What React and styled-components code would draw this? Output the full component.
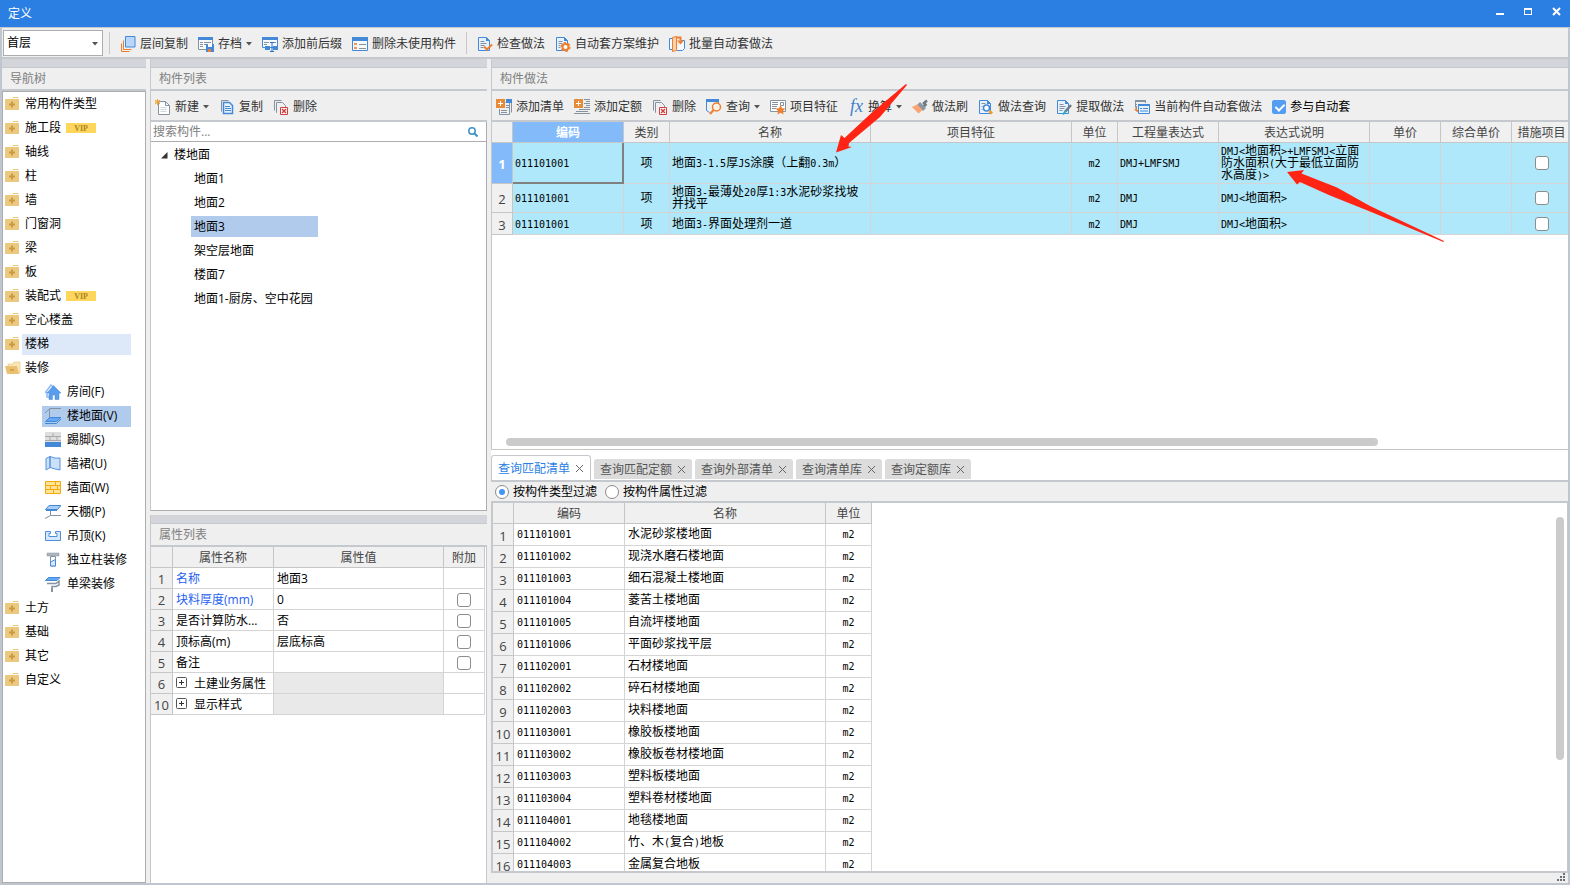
import React, { useState } from 'react';
import styled, { createGlobalStyle, css } from 'styled-components';

const UI_FONT = "'Open Sans', 'Noto Sans CJK SC', sans-serif";
const MONO_FONT = "'DejaVu Sans Mono', 'Noto Sans CJK SC', monospace";

const GlobalStyle = createGlobalStyle`
    * {
        box-sizing: border-box;
    }
    body {
        margin: 0;
        overflow: hidden;
        background: #efefef;
    }
    body, button, input, select, table {
        font-family: ${UI_FONT};
        font-size: 12px;
        line-height: 16px;
        color: #000000;
    }
    button {
        margin: 0;
        padding: 0;
        border: none;
        background: none;
        white-space: nowrap;
    }
    ul {
        margin: 0;
        padding: 0;
        list-style: none;
    }
`;

/* ---------- layout ---------- */

const Window = styled.div`
    position: relative;
    display: flex;
    flex-direction: column;
    height: 100vh;
    border: solid #c0c6d0;
    border-width: 0 2px 2px 2px;
    background: #efefef;
`;
const TitleBar = styled.header`
    display: flex;
    justify-content: space-between;
    align-items: center;
    flex: none;
    height: 28px;
    margin: 0 -2px;
    padding-left: 8px;
    border-bottom: 1px solid #c5c8cd;
    background: #2b7fe3;
    color: #ffffff;
`;
const WindowButton = styled.button`
    width: 28px;
    height: 27px;
    svg {
        display: block;
        margin: 0 auto;
    }
`;
const MainToolbar = styled.div`
    display: flex;
    align-items: center;
    flex: none;
    gap: 10px;
    height: 31px;
    padding-left: 1px;
    border-bottom: 2px solid #c5c8cd;
`;
const Workspace = styled.main`
    display: grid;
    grid-template-columns: 144px 337px minmax(0, 1fr);
    gap: 4px;
    flex: 1;
    min-height: 0;
`;
const NavColumn = styled.section`
    display: flex;
    flex-direction: column;
    min-height: 0;
`;
const MiddleColumn = styled.div`
    display: grid;
    grid-template-rows: minmax(0, 1fr) 368px;
    gap: 4px;
    min-height: 0;
`;
const RightColumn = styled.div`
    display: grid;
    grid-template-rows: minmax(0, 1fr) 433px;
    min-height: 0;
    min-width: 0;
`;
const Panel = styled.section`
    display: flex;
    flex-direction: column;
    min-height: 0;
    min-width: 0;
    border-left: 1px solid #c5c8cd;
`;

const PanelTitle = styled.h2`
    flex: none;
    height: 32px;
    margin: 0;
    padding: 4px 8px 0;
    border-top: 8px solid #d3d5db;
    border-bottom: 2px solid #c5c8cd;
    box-shadow: inset 0 1px 0 #c5c8cd;
    font-size: 12px;
    font-weight: normal;
    line-height: 16px;
    color: #808080;
`;

/* ---------- toolbar parts ---------- */

const PanelToolbar = styled.div`
    display: flex;
    align-items: center;
    flex: none;
    gap: 10px;
    height: 31px;
    padding: 2px 0 0 4px;
    border-bottom: 2px solid #c5c8cd;
`;
const ToolButton = styled.button`
    display: flex;
    align-items: center;
    gap: 4px;
    padding-top: ${(props) => (props.$low ? '2px' : '0')};
    color: #333333;
    svg {
        overflow: visible;
    }
`;
const Separator = styled.span`
    width: 1px;
    height: 22px;
    background: #c8c8c8;
`;
const FloorField = styled.label`
    position: relative;
    width: 100px;
    height: 26px;
    margin-right: -4px;
    select {
        appearance: none;
        width: 100%;
        height: 100%;
        padding: 0 3px;
        border: 1px solid #adadad;
        border-radius: 0;
        background: #ffffff;
    }
    svg {
        position: absolute;
        right: 5px;
        top: 12px;
    }
`;

const CheckBox = styled.input.attrs({ type: 'checkbox' })`
    appearance: none;
    display: block;
    width: 14px;
    height: 14px;
    margin: ${(props) => (props.$inCell ? '0 auto' : '0')};
    border: 1px solid #8c8c8c;
    border-radius: 3px;
    background: #ffffff;
    &:checked {
        border-color: #549df5;
        border-radius: 2px;
        background: #549df5;
    }
    &:checked::after {
        content: '';
        display: block;
        width: 4px;
        height: 7px;
        margin: 1px 0 0 4px;
        border: solid #ffffff;
        border-width: 0 2px 2px 0;
        transform: rotate(45deg);
    }
`;
const RadioButton = styled.input.attrs({ type: 'radio' })`
    appearance: none;
    width: 14px;
    height: 14px;
    margin: 0;
    padding: 3px;
    border: 1px solid #8c8c8c;
    border-radius: 50%;
    background: #ffffff;
    &:checked::after {
        content: '';
        display: block;
        width: 6px;
        height: 6px;
        border-radius: 50%;
        background: #4295f5;
    }
`;
const CheckLabel = styled.label`
    display: flex;
    align-items: center;
    gap: 4px;
    white-space: nowrap;
`;

/* ---------- navigation tree ---------- */

const NavList = styled.ul`
    flex: 1;
    min-height: 0;
    overflow: hidden;
    border: 1px solid #adadad;
    background: #ffffff;
`;
const NavItem = styled.li`
    display: flex;
    align-items: center;
    height: 24px;
    padding: 0 14px 0 ${(props) => (props.$sub ? '39px' : '2px')};
`;
const NavLabel = styled.button`
    display: flex;
    align-items: center;
    flex: 1;
    gap: ${(props) => (props.$sub ? '6px' : '5px')};
    height: 21px;
    margin-left: ${(props) => (props.$sub ? '0' : '1px')};
    padding-left: 3px;
    background: ${(props) => props.$bg || 'transparent'};
`;
const VipBadge = styled.span`
    width: 30px;
    height: 10px;
    background: #ffd65c;
    font-family: 'Liberation Serif', serif;
    font-size: 8px;
    font-weight: bold;
    line-height: 11px;
    text-align: center;
    color: #a8832a;
`;

/* ---------- component tree ---------- */

const SearchBox = styled.label`
    display: flex;
    align-items: center;
    flex: none;
    height: 19px;
    padding: 0 8px 0 2px;
    border-right: 1px solid #adadad;
    background: #ffffff;
    input {
        flex: 1;
        min-width: 0;
        padding: 0;
        border: none;
        outline: none;
        background: transparent;
    }
    input::placeholder {
        color: #808080;
        opacity: 1;
    }
`;
const TreeBox = styled.ul`
    flex: 1;
    min-height: 0;
    overflow: hidden;
    border: 1px solid #adadad;
    border-left: none;
    background: #ffffff;
`;
const TreeRoot = styled.li`
    display: flex;
    align-items: center;
    gap: 6px;
    height: 24px;
    padding: 2px 0 0 10px;
`;
const TreeItem = styled.li`
    height: 24px;
    padding: 2px 0 0 40px;
    button {
        min-width: 127px;
        height: 21px;
        padding: 0 3px;
        text-align: left;
        background: ${(props) => (props.$selected ? '#b1cbed' : 'transparent')};
    }
`;

/* ---------- tables ---------- */

const Table = styled.table`
    flex: none;
    table-layout: fixed;
    border-collapse: separate;
    border-spacing: 0;
    width: ${(props) => props.$width};
`;
const HeadCell = styled.th`
    height: 21px;
    padding: 2px 0 0;
    border: solid #c6c6c6;
    border-width: 0 1px 1px 0;
    background: ${(props) => (props.$active ? '#83bbfa' : '#f0f0f0')};
    font-weight: ${(props) => (props.$active ? 'bold' : 'normal')};
    white-space: nowrap;
    color: ${(props) => (props.$active ? '#ffffff' : '#444444')};
`;
const RowHead = styled(HeadCell)`
    height: ${(props) => props.$height};
    font-size: 13px;
`;
const Cell = styled.td`
    height: ${(props) => props.$height || '21px'};
    padding: 1px 3px 0;
    border: solid #d4d4d4;
    border-width: 0 1px 1px 0;
    background: ${(props) => props.$bg || '#ffffff'};
    text-align: ${(props) => props.$align || 'left'};
    white-space: nowrap;
    color: ${(props) => (props.$link ? '#1f5ff2' : '#000000')};
`;
const MonoCell = styled(Cell)`
    padding: 0 2px;
    line-height: 12px;
    white-space: normal;
    ${(props) =>
        props.$focused &&
        css`
            border-right: 2px solid #808080;
            border-bottom: 2px solid #808080;
        `}
`;
const ResultCell = styled(MonoCell)`
    height: 22px;
    padding: 0 3px 2px;
`;
const Half = styled.span`
    font-family: ${MONO_FONT};
    font-size: 10px;
    line-height: 8px;
`;
const Expander = styled.button`
    display: inline-block;
    width: 12px;
    height: 12px;
    margin-right: 6px;
    vertical-align: -1px;
    svg {
        display: block;
    }
`;
const PropertyBody = styled.div`
    flex: 1;
    min-height: 0;
    border-right: 1px solid #c5c8cd;
    background: #ffffff;
`;
const MethodBody = styled.div`
    display: flex;
    flex-direction: column;
    justify-content: space-between;
    flex: 1;
    min-height: 0;
    overflow: hidden;
    border-bottom: 1px solid #c5c5c5;
    background: #ffffff;
`;
const HorizontalThumb = styled.div`
    width: 81%;
    height: 8px;
    margin: 0 0 3px 14px;
    border-radius: 4px;
    background: #cbcbcb;
`;

/* ---------- query panel ---------- */

const QueryPanel = styled.section`
    display: flex;
    flex-direction: column;
    min-height: 0;
`;
const TabRow = styled.div`
    display: flex;
    align-items: flex-end;
    flex: none;
    gap: 3px;
    height: 30px;
    background: #ffffff;
`;
const Tab = styled.div`
    display: flex;
    align-items: center;
    gap: 5px;
    height: 20px;
    margin-bottom: 1px;
    padding: 1px 6px 0;
    border-radius: 3px 3px 0 0;
    background: #dcdcdc;
    button {
        color: #555555;
    }
    ${(props) =>
        props.$active &&
        css`
            height: 25px;
            margin-bottom: 0;
            border: 1px solid #c5c8cd;
            border-bottom: none;
            background: #ffffff;
            button:first-child {
                color: #2b7fe3;
            }
        `}
`;
const FilterBar = styled.div`
    display: flex;
    align-items: center;
    flex: none;
    gap: 8px;
    height: 23px;
    padding-left: 4px;
    border: solid #c5c8cd;
    border-width: 2px 0;
`;
const ResultBody = styled.div`
    display: flex;
    justify-content: space-between;
    flex: 1;
    min-height: 0;
    overflow: hidden;
    border: solid #c5c8cd;
    border-width: 0 1px 2px 2px;
    background: #ffffff;
`;
const VerticalThumb = styled.div`
    width: 8px;
    height: 66%;
    margin: 14px 3px 0 0;
    border-radius: 4px;
    background: #cbcbcb;
`;
const StatusBar = styled.footer`
    display: flex;
    justify-content: flex-end;
    flex: none;
    height: 10px;
    padding-right: 2px;
`;

const ArrowLayer = styled.svg`
    position: absolute;
    left: ${(props) => props.$left}px;
    top: ${(props) => props.$top}px;
    pointer-events: none;
`;

/* ---------- icons ---------- */

const B = '#4489d8';
const G = '#8593a0';
const O = '#ef7f2d';

const docPath = 'M1.5 1.5h8l3 3v10h-11z';

const icons = {
    layerCopy: (
        <>
            <path d="M5.5.5h9.5v10.5H5.5z" fill="#b9d7fc" stroke={B} />
            <path d="M3.5 4.5v9h8M1.5 7.5v8h8" fill="none" stroke={O} />
        </>
    ),
    archive: (
        <>
            <path d="M.5 1.5h14v12h-14z" fill="#f7fafd" stroke={G} />
            <path d="M0 1h15v3H0z" fill={B} />
            <path d="M2 6.5h3M6 6.5h7M2 8.5h3M2 10.5h3M6 8.5h2" stroke={G} />
            <path d="M8 8h8v8H8z" fill={B} />
            <path d="M10 8h4v3h-4z" fill="#fff" />
            <path d="M10 13h3v3h-3z" fill={O} />
        </>
    ),
    affix: (
        <>
            <path d="M.5 1.5h15v10H.5z" fill="#f7fafd" stroke={B} />
            <path d="M0 1h16v3H0z" fill={B} />
            <path d="M2 6.5h5M2 8.5h3M11 6.5h3" stroke={G} />
            <path d="M3 10h5v4H3zM11 10h5v4h-5z" fill={B} />
            <path d="M8 6.5h4M8 15.5h4M10 7v8" stroke="#2d6fbf" fill="none" />
        </>
    ),
    unused: (
        <>
            <path d="M.5 1.5h15v13H.5z" fill="#f7fafd" stroke={B} />
            <path d="M0 1h16v4H0z" fill={B} />
            <path d="M2 7l3 2M5 7L2 9M2 11l3 2M5 11l-3 2" stroke={O} />
            <path d="M7 8.5h7M7 12.5h7" stroke={G} />
        </>
    ),
    check: (
        <>
            <path d={docPath} fill="#e8f2fe" stroke={B} />
            <path d="M9 1v4h4z" fill={B} />
            <path d="M3.5 5.5h4M3.5 7.5h6M3.5 9.5h4M3.5 11.5h3" stroke={G} />
            <path d="M7 10.5l3 3 5-5" fill="none" stroke={O} strokeWidth="2" />
        </>
    ),
    gearDoc: (
        <>
            <path d={docPath} fill="#e8f2fe" stroke={B} />
            <path d="M9 1v4h4z" fill={B} />
            <path d="M3.5 5.5h4M3.5 7.5h4M3.5 9.5h2M3.5 11.5h2" stroke={G} />
            <circle cx="10.5" cy="11" r="3" fill="#fff" stroke={O} strokeWidth="2" />
            <circle cx="10.5" cy="11" r="4.3" fill="none" stroke={O} strokeWidth="1.5" strokeDasharray="2.2 2.3" />
        </>
    ),
    batch: (
        <>
            <path d="M4 2.5H.5v11H4M12 4.5h3.5v8l-2 2H8" fill="#f7fbff" stroke={B} />
            <path d="M3.5 1.5l4-1v14l-4 1z" fill="#fbd0ac" stroke={O} />
            <path d="M7 1.5h4.5v3" fill="none" stroke={O} strokeWidth="2" />
            <path d="M8 4.5h7l-3.5 4z" fill={O} />
        </>
    ),
    newDoc: (
        <>
            <path d="M3.5 2.5h7l4 4v9h-11z" fill="#fff" stroke={G} />
            <path d="M10.5 2.5v4h4" fill="none" stroke={G} />
            <path d="M5.5 8.5h6M5.5 10.5h6M5.5 12.5h6" stroke="#d0d5da" />
            <path d="M0 1l5 4M5 1L0 5M2.5 0v6M0 3h5" stroke="#f0a22e" />
        </>
    ),
    copy: (
        <>
            <path d="M2.5 12.5v-11h7" fill="none" stroke={G} />
            <path d="M4.5 3.5h6l3 3v8h-9z" fill="#e8f2fe" stroke={B} strokeWidth="1.5" />
            <path d="M6 7.5h5M6 9.5h6M6 11.5h6" stroke={B} />
        </>
    ),
    remove: (
        <>
            <path d="M1.5 11.5v-10h7M4 13.5h-.5v-10h6l3 3V8" fill="none" stroke={G} />
            <path d="M7.5 8.5h7v7h-7z" fill="#fff" stroke="#d1403f" />
            <path d="M9 10l4 4M13 10l-4 4" stroke="#d1403f" strokeWidth="1.5" />
        </>
    ),
    addList: (
        <>
            <path d="M9.5 3.5h6v10M3.5 10v5.5h10v-12" fill="none" stroke={G} />
            <path d="M10 0h6v4h-6z" fill={B} />
            <path d="M5 11.5h6M10 6.5h3M10 8.5h3M5 13.5h6" stroke={G} />
            <path d="M0 0h9v9H0z" fill="#e88b38" />
            <path d="M4.5 2v5M2 4.5h5" stroke="#fff" />
        </>
    ),
    addQuota: (
        <>
            <path d="M10 .5h6M12 2.5h4M10 4.5h6M12 6.5h4M10 8.5h6M5 10.5h11M2 12.5h12M0 14.5h16" stroke={G} />
            <path d="M0 0h9v9H0z" fill="#e88b38" />
            <path d="M4.5 2v5M2 4.5h5" stroke="#fff" />
        </>
    ),
    query: (
        <>
            <path d="M.5 1v10.5l3 2M12.5 3v3" fill="none" stroke={B} />
            <path d="M0 0h13v3H0z" fill={B} />
            <circle cx="10.5" cy="8" r="4" fill="#fdf3ea" stroke={O} strokeWidth="1.5" />
            <path d="M7.5 11L4 15" stroke={O} strokeWidth="2" />
        </>
    ),
    feature: (
        <>
            <path d="M.5 1.5h15v11H.5z" fill="#fff" stroke={G} />
            <path d="M2 3.5h6M2 5.5h6M2 7.5h5M2 9.5h4" stroke={G} />
            <path d="M10.5 3.5h3v3h-3z" fill="none" stroke={G} />
            <path d="M10.5 6l1.5 3.2 3.5.4-2.6 2.3.7 3.6-3.1-1.8-3.1 1.8.7-3.6L5.5 9.600l3.500-.4z" fill={O} />
        </>
    ),
    fx: (
        <text x="2" y="13" fontFamily="Liberation Serif, serif" fontStyle="italic" fontSize="18" fill="#3c7fce">
            fx
        </text>
    ),
    brush: (
        <>
            <path d="M15 1.5l-4 3.5M14.5 5l-3 2.5" stroke="#6d7b87" strokeWidth="2.5" />
            <path d="M8 3l6 6-3 3-6-6z" fill="#8c979f" />
            <path d="M5 5.5l5.5 5.5-4 3.5L0 8z" fill="#fba373" />
        </>
    ),
    methodQuery: (
        <>
            <path d={docPath} fill="#e8f2fe" stroke={B} />
            <path d="M9 1v4h4z" fill={B} />
            <path d="M3.5 4.5h4M3.5 7.5h1M3.5 10.5h1" stroke={G} />
            <circle cx="8.5" cy="9" r="3" fill="#fff" stroke={B} strokeWidth="1.5" />
            <path d="M12.5 11l2.5 2.5-2 2-2.5-2.5z" fill="#f29a1f" />
        </>
    ),
    extract: (
        <>
            <path d={docPath} fill="#e8f2fe" stroke={B} />
            <path d="M9 1v4h4z" fill={B} />
            <path d="M3.5 5.5h4M3.5 7.5h6M3.5 9.5h5M3.5 11.5h3" stroke={G} />
            <path d="M15 6l-6 7" stroke="#6d7b87" strokeWidth="2.5" />
            <path d="M9.5 12L7 15.5" stroke="#27b0c9" strokeWidth="2" />
        </>
    ),
    currentAuto: (
        <>
            <path d="M3 8.5H1.5v-7h10V4" fill="none" stroke={G} />
            <path d="M1 1h11v2H1z" fill={G} />
            <path d="M2.5 5v6" stroke={G} strokeDasharray="1 1" />
            <path d="M1 10l3 2.5" stroke={O} strokeWidth="2" />
            <path d="M4.5 5.5h11v9h-11z" fill="#e8f2fe" stroke={B} />
            <path d="M4 5h12v2H4z" fill={B} />
            <path d="M6 9.5h2M9 9.5h5M6 12h8" stroke={B} />
        </>
    ),
    room: (
        <>
            <path d="M0 9l6-8 2 2M2 8v5h2" fill="none" stroke="#8bbcf5" strokeWidth="1.5" />
            <path d="M8.5 1.5L16 9h-2v6.5h-4V11H7.5v4.5H4V9H2z" fill="#5a9dec" stroke={B} strokeWidth="0.5" />
        </>
    ),
    floor: (
        <>
            <path d="M0 5l5-4.5h11M4.5 1v9" fill="none" stroke={G} />
            <path d="M4.5 9.5H16l-4.500 4H.5z" fill="#64a8f5" stroke={B} />
            <path d="M0 15.5h11.500L16 11" fill="none" stroke={B} />
        </>
    ),
    skirting: (
        <>
            <path d="M0 0h16v10H0z" fill="#dedede" />
            <path d="M0 4.5h16M0 8.5h16M8 1v3M5 5v3M12 5v3" stroke="#aaa" />
            <path d="M0 10h16v5H0z" fill={B} />
        </>
    ),
    dado: <path d="M1 2.5l4-2v11l-4 2.500zM5 .5q5 2.500 10 1.500v12q-5-1-10-2.500z" fill="#cbe0f9" stroke="#5592dc" />,
    wall: (
        <>
            <path d="M.5 1.5h15v12H.5z" fill="#ffe49a" stroke="#f7a90c" />
            <path d="M1 5.5h14M1 9.5h14M10.5 2v3.500M5.5 5.5v4M12.5 5.5v4M8.5 9.500v4" stroke="#f7a90c" />
        </>
    ),
    canopy: (
        <>
            <path d="M4 1.500h12l-3.500 4H.5z" fill="#a9cdf8" stroke={B} />
            <path d="M1 6.500h11" stroke={B} />
            <path d="M5.500 7v4.500M0 14.500l5.500-3H16" fill="none" stroke={G} />
        </>
    ),
    ceiling: (
        <path d="M.5 3.500h5v2H4v3h8v-3h-1.500v-2h5v9H.5z" fill="#d8e8fb" stroke="#4b8edc" />
    ),
    column: (
        <>
            <path d="M2 1h12v3H2z" fill="#b0b6bd" stroke={G} strokeWidth="0.5" />
            <path d="M5.500 4.500h5v9.500h-5z" fill="#fff" stroke={G} />
            <path d="M5.500 10l5-2.500v6.500h-5z" fill="#d8e8fb" stroke={B} />
        </>
    ),
    beam: (
        <>
            <path d="M3.500 1.500H15l-3 3H.5z" fill="#64a8f5" stroke={B} />
            <path d="M2 7.500h9l3-2.500v4l-3 1.500H7V13" fill="none" stroke={G} strokeWidth="1.500" />
            <path d="M6 12h2v4H6z" fill={G} />
        </>
    ),
};

const Icon = ({ name }) => (
    <svg width="16" height="16" viewBox="0 0 16 16" aria-hidden="true">
        {icons[name]}
    </svg>
);

const Caret = () => (
    <svg width="6" height="4" viewBox="0 0 6 4" aria-hidden="true">
        <path d="M0 0h6L3 3.500z" fill="#555555" />
    </svg>
);

const Folder = ({ open }) => (
    <svg width="16" height="14" viewBox="0 0 16 14" aria-hidden="true">
        {open ? (
            <>
                <path d="M3 3h5l1-2h6v11H3z" fill="#fbe6b8" stroke="#e3b866" strokeWidth="0.500" />
                <path d="M0 5h12l2 8H2z" fill="#ecc072" />
                <path d="M5 9h4" stroke="#b98524" />
            </>
        ) : (
            <>
                <path d="M8 0h5l1 1H7z" fill="#ecc980" />
                <path d="M0 2h14v11H0z" fill="#ecc980" />
                <path d="M4 7.500h6M7 4.500v6" stroke="#c99b42" strokeWidth="2" />
            </>
        )}
    </svg>
);

const CloseMark = ({ color = '#666666', width = 1 }) => (
    <svg width="9" height="9" viewBox="0 0 9 9" aria-hidden="true">
        <path d="M1 1l7 7M8 1L1 8" stroke={color} strokeWidth={width} />
    </svg>
);

/* ---------- data ---------- */

const mainTools = [
    [
        { icon: 'layerCopy', text: '层间复制' },
        { icon: 'archive', text: '存档', menu: true },
        { icon: 'affix', text: '添加前后缀' },
        { icon: 'unused', text: '删除未使用构件' },
    ],
    [
        { icon: 'check', text: '检查做法' },
        { icon: 'gearDoc', text: '自动套方案维护' },
        { icon: 'batch', text: '批量自动套做法' },
    ],
];
const listTools = [
    { icon: 'newDoc', text: '新建', menu: true },
    { icon: 'copy', text: '复制' },
    { icon: 'remove', text: '删除' },
];
const methodTools = [
    { icon: 'addList', text: '添加清单' },
    { icon: 'addQuota', text: '添加定额' },
    { icon: 'remove', text: '删除' },
    { icon: 'query', text: '查询', menu: true },
    { icon: 'feature', text: '项目特征' },
    { icon: 'fx', text: '换算', menu: true },
    { icon: 'brush', text: '做法刷' },
    { icon: 'methodQuery', text: '做法查询' },
    { icon: 'extract', text: '提取做法' },
    { icon: 'currentAuto', text: '当前构件自动套做法' },
];

const navItems = [
    { text: '常用构件类型' },
    { text: '施工段', vip: true },
    { text: '轴线' },
    { text: '柱' },
    { text: '墙' },
    { text: '门窗洞' },
    { text: '梁' },
    { text: '板' },
    { text: '装配式', vip: true },
    { text: '空心楼盖' },
    { text: '楼梯', bg: '#dde9f9' },
    { text: '装修', open: true },
    { text: '房间(F)', icon: 'room' },
    { text: '楼地面(V)', icon: 'floor', bg: '#b1cbed' },
    { text: '踢脚(S)', icon: 'skirting' },
    { text: '墙裙(U)', icon: 'dado' },
    { text: '墙面(W)', icon: 'wall' },
    { text: '天棚(P)', icon: 'canopy' },
    { text: '吊顶(K)', icon: 'ceiling' },
    { text: '独立柱装修', icon: 'column' },
    { text: '单梁装修', icon: 'beam' },
    { text: '土方' },
    { text: '基础' },
    { text: '其它' },
    { text: '自定义' },
];

const components = ['地面1', '地面2', '地面3', '架空层地面', '楼面7', '地面1-厨房、空中花园'];

const properties = [
    { no: 1, name: '名称', value: '地面3', link: true },
    { no: 2, name: '块料厚度(mm)', value: '0', link: true, check: true },
    { no: 3, name: '是否计算防水...', value: '否', check: true },
    { no: 4, name: '顶标高(m)', value: '层底标高', check: true },
    { no: 5, name: '备注', value: '', check: true },
    { no: 6, name: '土建业务属性', group: true },
    { no: 10, name: '显示样式', group: true },
];

const methodColumns = [
    ['编码', 111],
    ['类别', 46],
    ['名称', 201],
    ['项目特征', 201],
    ['单位', 46],
    ['工程量表达式', 101],
    ['表达式说明', 151],
    ['单价', 71],
    ['综合单价', 71],
    ['措施项目', null],
];
const methodRows = [
    {
        code: '011101001',
        name: '地面3-1.5厚JS涂膜（上翻0.3m）',
        expression: 'DMJ+LMFSMJ',
        note: 'DMJ<地面积>+LMFSMJ<立面防水面积(大于最低立面防水高度)>',
        height: '41px',
    },
    {
        code: '011101001',
        name: '地面3-最薄处20厚1:3水泥砂浆找坡并找平',
        expression: 'DMJ',
        note: 'DMJ<地面积>',
        height: '29px',
    },
    { code: '011101001', name: '地面3-界面处理剂一道', expression: 'DMJ', note: 'DMJ<地面积>', height: '22px' },
];

const tabs = ['查询匹配清单', '查询匹配定额', '查询外部清单', '查询清单库', '查询定额库'];

const results = [
    ['011101001', '水泥砂浆楼地面'],
    ['011101002', '现浇水磨石楼地面'],
    ['011101003', '细石混凝土楼地面'],
    ['011101004', '菱苦土楼地面'],
    ['011101005', '自流坪楼地面'],
    ['011101006', '平面砂浆找平层'],
    ['011102001', '石材楼地面'],
    ['011102002', '碎石材楼地面'],
    ['011102003', '块料楼地面'],
    ['011103001', '橡胶板楼地面'],
    ['011103002', '橡胶板卷材楼地面'],
    ['011103003', '塑料板楼地面'],
    ['011103004', '塑料卷材楼地面'],
    ['011104001', '地毯楼地面'],
    ['011104002', '竹、木(复合)地板'],
    ['011104003', '金属复合地板'],
];

/* ---------- components ---------- */

// latin runs take half the width of a Chinese character
const MonoText = ({ children }) =>
    children.split(/([\x20-\x7e]+)/).map((part, index) => (index % 2 ? <Half key={index}>{part}</Half> : part));

const Tool = ({ tool, low }) => (
    <ToolButton type="button" $low={low}>
        <Icon name={tool.icon} />
        {tool.text}
        {tool.menu && <Caret />}
    </ToolButton>
);

const NavTree = () => (
    <NavColumn>
        <PanelTitle>导航树</PanelTitle>
        <NavList>
            {navItems.map((item) => (
                <NavItem key={item.text} $sub={!!item.icon}>
                    {!item.icon && <Folder open={item.open} />}
                    <NavLabel type="button" $sub={!!item.icon} $bg={item.bg}>
                        {item.icon && <Icon name={item.icon} />}
                        {item.text}
                        {item.vip && <VipBadge>VIP</VipBadge>}
                    </NavLabel>
                </NavItem>
            ))}
        </NavList>
    </NavColumn>
);

const ComponentList = () => {
    const [selected, setSelected] = useState('地面3');
    return (
        <Panel>
            <PanelTitle>构件列表</PanelTitle>
            <PanelToolbar>
                {listTools.map((tool) => (
                    <Tool key={tool.text} tool={tool} />
                ))}
            </PanelToolbar>
            <SearchBox>
                <input type="text" placeholder="搜索构件..." aria-label="搜索构件" />
                <svg width="10" height="10" viewBox="0 0 10 10" aria-hidden="true">
                    <circle cx="4" cy="4" r="3.2" fill="none" stroke="#3c93c9" strokeWidth="1.500" />
                    <path d="M6.500 6.500L9.500 9.500" stroke="#3c93c9" strokeWidth="2" />
                </svg>
            </SearchBox>
            <TreeBox>
                <TreeRoot>
                    <svg width="7" height="7" viewBox="0 0 7 7" aria-hidden="true">
                        <path d="M6.500 0v6.500H0z" fill="#333333" />
                    </svg>
                    楼地面
                </TreeRoot>
                {components.map((name) => (
                    <TreeItem key={name} $selected={name === selected}>
                        <button type="button" onClick={() => setSelected(name)}>
                            {name}
                        </button>
                    </TreeItem>
                ))}
            </TreeBox>
        </Panel>
    );
};

const PropertyList = () => (
    <Panel>
        <PanelTitle>属性列表</PanelTitle>
        <PropertyBody>
            <Table $width="334px">
                <colgroup>
                    <col width="22" />
                    <col width="101" />
                    <col width="170" />
                    <col width="41" />
                </colgroup>
                <thead>
                    <tr>
                        <HeadCell />
                        <HeadCell>属性名称</HeadCell>
                        <HeadCell>属性值</HeadCell>
                        <HeadCell>附加</HeadCell>
                    </tr>
                </thead>
                <tbody>
                    {properties.map((item) => (
                        <tr key={item.no}>
                            <RowHead $height="21px">{item.no}</RowHead>
                            <Cell $link={item.link}>
                                {item.group && (
                                    <Expander type="button" aria-label="展开">
                                        <svg width="12" height="12" viewBox="0 0 12 12">
                                            <rect x="0.500" y="0.500" width="10" height="10" rx="1" fill="#fff" stroke="#555" />
                                            <path d="M3 5.500h5M5.500 3v5" stroke="#333" />
                                        </svg>
                                    </Expander>
                                )}
                                {item.name}
                            </Cell>
                            <Cell $bg={item.group && '#e9e9e9'}>{item.value}</Cell>
                            <Cell>{item.check && <CheckBox $inCell aria-label={item.name} />}</Cell>
                        </tr>
                    ))}
                </tbody>
            </Table>
        </PropertyBody>
    </Panel>
);

const MethodTable = () => (
    // the last column runs on under the right edge of the panel
    <Table $width="calc(100% + 4px)">
        <colgroup>
            <col width="21" />
            {methodColumns.map(([title, width]) => (
                <col key={title} width={width || undefined} />
            ))}
        </colgroup>
        <thead>
            <tr>
                <HeadCell />
                {methodColumns.map(([title], index) => (
                    <HeadCell key={title} $active={index === 0}>
                        {title}
                    </HeadCell>
                ))}
            </tr>
        </thead>
        <tbody>
            {methodRows.map((row, index) => {
                const cell = { $bg: '#afe8fa', $height: row.height };
                return (
                    <tr key={row.name}>
                        <RowHead $height={row.height} $active={index === 0}>
                            {index + 1}
                        </RowHead>
                        <MonoCell {...cell} $focused={index === 0}>
                            <MonoText>{row.code}</MonoText>
                        </MonoCell>
                        <MonoCell {...cell} $align="center">
                            项
                        </MonoCell>
                        <MonoCell {...cell}>
                            <MonoText>{row.name}</MonoText>
                        </MonoCell>
                        <MonoCell {...cell} />
                        <MonoCell {...cell} $align="center">
                            <MonoText>m2</MonoText>
                        </MonoCell>
                        <MonoCell {...cell}>
                            <MonoText>{row.expression}</MonoText>
                        </MonoCell>
                        <MonoCell {...cell}>
                            <MonoText>{row.note}</MonoText>
                        </MonoCell>
                        <MonoCell {...cell} />
                        <MonoCell {...cell} />
                        <MonoCell {...cell}>
                            <CheckBox $inCell aria-label="措施项目" />
                        </MonoCell>
                    </tr>
                );
            })}
        </tbody>
    </Table>
);

const MethodPanel = () => (
    <Panel>
        <PanelTitle>构件做法</PanelTitle>
        <PanelToolbar>
            {methodTools.map((tool) => (
                <Tool key={tool.text} tool={tool} />
            ))}
            <CheckLabel>
                <CheckBox defaultChecked />
                参与自动套
            </CheckLabel>
        </PanelToolbar>
        <MethodBody>
            <MethodTable />
            <HorizontalThumb />
        </MethodBody>
    </Panel>
);

const QueryResult = () => {
    const [activeTab, setActiveTab] = useState(tabs[0]);
    return (
        <QueryPanel>
            <TabRow>
                {tabs.map((tab) => (
                    <Tab key={tab} $active={tab === activeTab}>
                        <button type="button" onClick={() => setActiveTab(tab)}>
                            {tab}
                        </button>
                        <button type="button" aria-label="关闭">
                            <CloseMark />
                        </button>
                    </Tab>
                ))}
            </TabRow>
            <FilterBar>
                <CheckLabel>
                    <RadioButton name="filter" defaultChecked />
                    按构件类型过滤
                </CheckLabel>
                <CheckLabel>
                    <RadioButton name="filter" />
                    按构件属性过滤
                </CheckLabel>
            </FilterBar>
            <ResultBody>
                <Table $width="379px">
                    <colgroup>
                        <col width="21" />
                        <col width="111" />
                        <col width="201" />
                        <col width="46" />
                    </colgroup>
                    <thead>
                        <tr>
                            <HeadCell />
                            <HeadCell>编码</HeadCell>
                            <HeadCell>名称</HeadCell>
                            <HeadCell>单位</HeadCell>
                        </tr>
                    </thead>
                    <tbody>
                        {results.map(([code, name], index) => (
                            <tr key={code}>
                                <RowHead $height="22px">{index + 1}</RowHead>
                                <ResultCell>
                                    <MonoText>{code}</MonoText>
                                </ResultCell>
                                <ResultCell>
                                    <MonoText>{name}</MonoText>
                                </ResultCell>
                                <ResultCell $align="center">
                                    <MonoText>m2</MonoText>
                                </ResultCell>
                            </tr>
                        ))}
                    </tbody>
                </Table>
                <VerticalThumb />
            </ResultBody>
            <StatusBar>
                <svg width="9" height="9" viewBox="0 0 9 9" aria-hidden="true">
                    <path d="M6 0h2v2H6zM3 3h2v2H3zM6 3h2v2H6zM0 6h2v2H0zM3 6h2v2H3zM6 6h2v2H6z" fill="#6b7078" />
                </svg>
            </StatusBar>
        </QueryPanel>
    );
};

const App = () => {
    return (
        <Window>
            <GlobalStyle />
            <TitleBar>
                <span>定义</span>
                <div>
                    <WindowButton type="button" aria-label="最小化">
                        <svg width="8" height="9" viewBox="0 0 8 9">
                            <path d="M0 6h8v2H0z" fill="#fff" />
                        </svg>
                    </WindowButton>
                    <WindowButton type="button" aria-label="最大化">
                        <svg width="8" height="8" viewBox="0 0 8 8">
                            <path d="M0 0h8v7H0zM1 2v4h6V2z" fill="#fff" fillRule="evenodd" />
                        </svg>
                    </WindowButton>
                    <WindowButton type="button" aria-label="关闭">
                        <CloseMark color="#ffffff" width={2} />
                    </WindowButton>
                </div>
            </TitleBar>
            <MainToolbar>
                <FloorField>
                    <select aria-label="楼层" defaultValue="首层">
                        <option>首层</option>
                    </select>
                    <Caret />
                </FloorField>
                {mainTools.map((group, index) => (
                    <React.Fragment key={index}>
                        <Separator />
                        {group.map((tool) => (
                            <Tool key={tool.text} tool={tool} low />
                        ))}
                    </React.Fragment>
                ))}
            </MainToolbar>
            <Workspace>
                <NavTree />
                <MiddleColumn>
                    <ComponentList />
                    <PropertyList />
                </MiddleColumn>
                <RightColumn>
                    <MethodPanel />
                    <QueryResult />
                </RightColumn>
            </Workspace>
            <ArrowLayer $left={832} $top={82} width="76" height="74" viewBox="834 82 76 74" aria-hidden="true">
                <path d="M836 152.500L841 135l3.500 3L872 112.500 906 84l1 1-27 32-31 26-.5 3.500 3.500.5z" fill="#ff2414" />
            </ArrowLayer>
            <ArrowLayer $left={1283} $top={168} width="162" height="76" viewBox="1285 168 162 76" aria-hidden="true">
                <path d="M1287 172l17-2-2.500 3.500 35.500 14 33 18.500 74 35-.5 1-73.500-30.500-40-16-30-13.500-3 2.500z" fill="#ff2414" />
            </ArrowLayer>
        </Window>
    );
};

export default App;
